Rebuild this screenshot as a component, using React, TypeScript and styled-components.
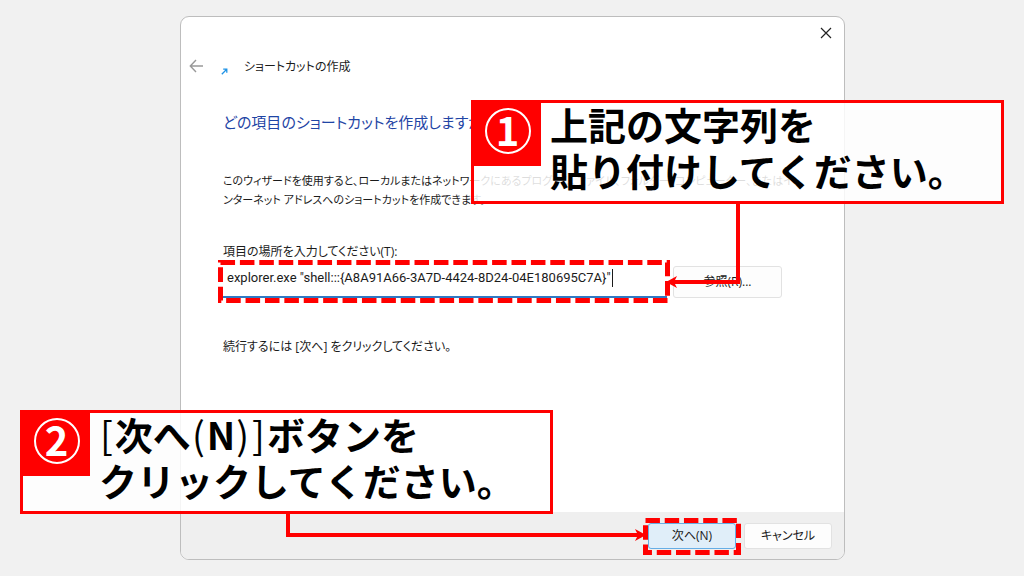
import React from "react";
import styled, { createGlobalStyle } from "styled-components";

const GlobalStyle = createGlobalStyle`
  * { box-sizing: border-box; }
  body {
    margin: 0;
    background: #f1f1f1;
    color: #1b1b1b;
    font-family: "Open Sans", "Noto Sans CJK JP", sans-serif;
    font-size: 12px;
    line-height: 19px;
    font-feature-settings: "palt", "kern";
  }
  button, input { font: inherit; color: inherit; font-feature-settings: inherit; }
`;

const Stage = styled.main`
  position: relative;
  padding: 16px 179px 16px 180px;
`;

const Dialog = styled.section`
  display: flex;
  flex-direction: column;
  border: 1px solid #bdbdbd;
  border-radius: 9px;
  background: #fff;
  overflow: hidden;
`;

const TitleBar = styled.header`
  display: flex;
  justify-content: flex-end;
  padding: 9px 11px 0;
`;

const IconButton = styled.button`
  display: flex;
  padding: 0;
  border: 0;
  background: none;
`;

const Heading = styled.div`
  display: flex;
  align-items: center;
  height: 20px;
  margin-top: 16px;
  padding-left: 8px;
`;

const AppIcon = styled.svg`
  margin: 10px 0 0 17px;
`;

const WindowTitle = styled.h1`
  margin: 0 0 0 16px;
  font-size: 12px;
  font-weight: 400;
`;

const Content = styled.div`
  display: flex;
  flex-direction: column;
  align-items: flex-start;
  padding: 33px 40px 156px 42px;
`;

const Question = styled.h2`
  margin: 0;
  color: #1f45a5;
  font-size: 15px;
  font-weight: 400;
  line-height: 26px;
`;

const Paragraph = styled.p<{ $small?: boolean }>`
  margin: 36px 0 0;
  font-size: ${(p) => (p.$small ? 11 : 12)}px;
  white-space: nowrap;
`;

const Label = styled.label`
  margin-top: 33px;
`;

const FieldRow = styled.div`
  display: flex;
  align-items: center;
  align-self: stretch;
  gap: 6px;
  margin: 4px 0 3px;
  padding-right: 22px;
`;

const FieldBox = styled.div`
  position: relative;
  flex: 1;
`;

const TextInput = styled.input`
  display: block;
  width: 100%;
  height: 33px;
  padding: 0 4px 6px;
  border: 0;
  border-bottom: 2px solid #2f78c4;
  background: #fff;
  font-family: Roboto, sans-serif;
  font-size: 13px;
  outline: none;
`;

const Caret = styled.span`
  position: absolute;
  left: 389px;
  top: 4px;
  width: 1px;
  height: 18px;
  background: #1b1b1b;
`;

const Button = styled.button<{ $primary?: boolean; $wide?: boolean }>`
  width: ${(p) => (p.$wide ? 109 : 88)}px;
  height: ${(p) => (p.$wide ? 32 : 26)}px;
  padding: 0;
  border: 1px solid ${(p) => (p.$primary ? "#66aee6" : "#e2e2e2")};
  border-radius: 3px;
  background: ${(p) => (p.$primary ? "#e0eef9" : "#fdfdfd")};
`;

const Footer = styled.footer`
  display: flex;
  justify-content: flex-end;
  align-items: center;
  gap: 8px;
  height: 47px;
  padding-right: 12px;
  background: #efefef;
`;

const ButtonBox = styled.div`
  position: relative;
  display: flex;
`;

const Highlight = styled.svg`
  position: absolute;
  left: -5px;
  top: -5px;
  pointer-events: none;
`;

const Callout = styled.aside<{ $left: number; $top: number }>`
  position: absolute;
  left: ${(p) => p.$left}px;
  top: ${(p) => p.$top}px;
  display: flex;
  align-items: flex-start;
  width: 533px;
  height: 104px;
  border: 3px solid #f00;
  background: rgba(255, 255, 255, 0.85);
`;

const Badge = styled.div`
  display: flex;
  justify-content: center;
  width: 67px;
  height: 63px;
  padding-top: 5px;
  background: #f00;
`;

const Number = styled.span`
  width: 46px;
  height: 46px;
  border: 2px solid #fff;
  border-radius: 50%;
  color: #fff;
  font-family: "Noto Sans CJK JP", sans-serif;
  font-size: 40px;
  font-weight: 700;
  line-height: 38px;
  text-align: center;
`;

const CalloutText = styled.p`
  margin: -2px 0 0 9px;
  color: #000;
  font-family: "Noto Sans CJK JP", sans-serif;
  font-size: 38px;
  font-weight: 700;
  font-feature-settings: normal;
  line-height: 46px;
  white-space: nowrap;
`;

const Bracket = styled.span`
  padding: 0 2px 0 1px;
  font-weight: 400;
`;

const Connector = styled.svg<{ $left: number; $top: number }>`
  position: absolute;
  left: ${(p) => p.$left}px;
  top: ${(p) => p.$top}px;
  pointer-events: none;
`;

export default function App() {
  return (
    <>
      <GlobalStyle />
      <Stage>
        <Dialog>
          <TitleBar>
            <IconButton aria-label="閉じる">
              <svg width="14" height="14" viewBox="0 0 14 14" stroke="#222" strokeWidth="1.2">
                <path d="M2 2l10 10M12 2L2 12" />
              </svg>
            </IconButton>
          </TitleBar>
          <Heading>
            <IconButton aria-label="戻る">
              <svg width="15" height="14" viewBox="0 0 15 14" fill="none" stroke="#999" strokeWidth="1.4">
                <path d="M14 7H1.500M7 1L1.300 7L7 13" />
              </svg>
            </IconButton>
            <AppIcon width="7" height="7" viewBox="0 0 7 7" fill="none" stroke="#1f93e6" strokeWidth="1.300">
              <path d="M.8 6.200L5.500 1.500M2.200 1.200H5.800V4.800" />
            </AppIcon>
            <WindowTitle>ショートカットの作成</WindowTitle>
          </Heading>
          <Content>
            <Question>どの項目のショートカットを作成しますか?</Question>
            <Paragraph $small>
              このウィザードを使用すると、ローカルまたはネットワークにあるプログラム、ファイル、フォルダー、コンピューター、またはイ
              <br />
              ンターネット アドレスへのショートカットを作成できます。
            </Paragraph>
            <Label htmlFor="location">項目の場所を入力してください(T):</Label>
            <FieldRow>
              <FieldBox>
                <TextInput id="location" defaultValue={'explorer.exe "shell:::{A8A91A66-3A7D-4424-8D24-04E180695C7A}"'} />
                <Caret />
                <Highlight width="452" height="43" fill="none" stroke="#f00" strokeWidth="5">
                  <rect x="2.500" y="2.500" width="447" height="38" pathLength="200" strokeDasharray="3 1" />
                </Highlight>
              </FieldBox>
              <Button $wide>参照(R)...</Button>
            </FieldRow>
            <Paragraph>続行するには [次へ] をクリックしてください。</Paragraph>
          </Content>
          <Footer>
            <ButtonBox>
              <Button $primary>次へ(N)</Button>
              <Highlight width="98" height="37" fill="none" stroke="#f00" strokeWidth="5">
                <rect x="2.500" y="2.500" width="93" height="32" pathLength="52" strokeDasharray="3 1" />
              </Highlight>
            </ButtonBox>
            <Button>キャンセル</Button>
          </Footer>
        </Dialog>
        <Callout $left={471} $top={100}>
          <Badge><Number>1</Number></Badge>
          <CalloutText>上記の文字列を<br />貼り付けしてください。</CalloutText>
          <Connector $left={191} $top={99} width="78" height="90">
            <path d="M73 0V80H8" fill="none" stroke="#f00" strokeWidth="4" />
            <path d="M1 80L12 74L9 80L12 86Z" fill="#f00" />
          </Connector>
        </Callout>
        <Callout $left={20} $top={410}>
          <Badge><Number>2</Number></Badge>
          <CalloutText>
            <Bracket>[</Bracket>次へ<Bracket>(</Bracket>N<Bracket>)</Bracket><Bracket>]</Bracket>ボタンを<br />クリックしてください。
          </CalloutText>
          <Connector $left={262} $top={99} width="364" height="34">
            <path d="M3 0V23H354" fill="none" stroke="#f00" strokeWidth="4" />
            <path d="M361 23L350 17L353 23L350 29Z" fill="#f00" />
          </Connector>
        </Callout>
      </Stage>
    </>
  );
}
